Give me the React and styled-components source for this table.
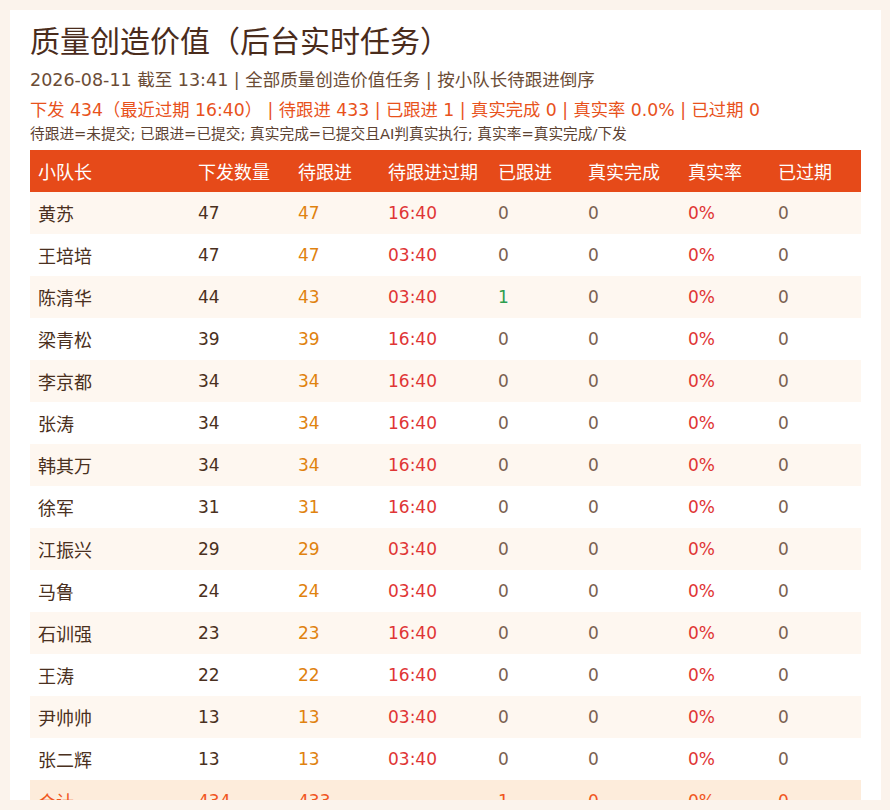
import React from "react";
import styled, { createGlobalStyle } from "styled-components";

const GlobalStyle = createGlobalStyle`
  html, body {
    margin: 0;
    padding: 0;
    background: #fbf3ec;
  }
  body {
    font-family: "DejaVu Sans", "Noto Sans CJK SC", sans-serif;
  }
`;

const leaders = [
  { name: "黄苏", issued: 47, pending: 47, due: "16:40", done: 0, real: 0, rate: "0%", expired: 0 },
  { name: "王培培", issued: 47, pending: 47, due: "03:40", done: 0, real: 0, rate: "0%", expired: 0 },
  { name: "陈清华", issued: 44, pending: 43, due: "03:40", done: 1, real: 0, rate: "0%", expired: 0 },
  { name: "梁青松", issued: 39, pending: 39, due: "16:40", done: 0, real: 0, rate: "0%", expired: 0 },
  { name: "李京都", issued: 34, pending: 34, due: "16:40", done: 0, real: 0, rate: "0%", expired: 0 },
  { name: "张涛", issued: 34, pending: 34, due: "16:40", done: 0, real: 0, rate: "0%", expired: 0 },
  { name: "韩其万", issued: 34, pending: 34, due: "16:40", done: 0, real: 0, rate: "0%", expired: 0 },
  { name: "徐军", issued: 31, pending: 31, due: "16:40", done: 0, real: 0, rate: "0%", expired: 0 },
  { name: "江振兴", issued: 29, pending: 29, due: "03:40", done: 0, real: 0, rate: "0%", expired: 0 },
  { name: "马鲁", issued: 24, pending: 24, due: "03:40", done: 0, real: 0, rate: "0%", expired: 0 },
  { name: "石训强", issued: 23, pending: 23, due: "16:40", done: 0, real: 0, rate: "0%", expired: 0 },
  { name: "王涛", issued: 22, pending: 22, due: "16:40", done: 0, real: 0, rate: "0%", expired: 0 },
  { name: "尹帅帅", issued: 13, pending: 13, due: "03:40", done: 0, real: 0, rate: "0%", expired: 0 },
  { name: "张二辉", issued: 13, pending: 13, due: "03:40", done: 0, real: 0, rate: "0%", expired: 0 },
];

const columns = ["小队长", "下发数量", "待跟进", "待跟进过期", "已跟进", "真实完成", "真实率", "已过期"];
const widths = [160, 100, 90, 110, 90, 100, 90, 91];

const App = () => {
  return (
    <>
      <GlobalStyle />
      <Card>
        <Title>质量创造价值（后台实时任务）</Title>
        <Subtitle>2026-08-11 截至 13:41 | 全部质量创造价值任务 | 按小队长待跟进倒序</Subtitle>
        <Stats>
          下发 434（最近过期 16:40） | 待跟进 433 | 已跟进 1 | 真实完成 0 | 真实率 0.0% | 已过期 0
        </Stats>
        <Notes>
          待跟进=未提交; 已跟进=已提交; 真实完成=已提交且AI判真实执行; 真实率=真实完成/下发
        </Notes>

        <Table>
          <colgroup>
            {widths.map((w, i) => (
              <col key={i} style={{ width: w }} />
            ))}
          </colgroup>
          <thead>
            <tr>
              {columns.map((c) => (
                <Th key={c}>{c}</Th>
              ))}
            </tr>
          </thead>
          <tbody>
            {leaders.map((row) => (
              <Row key={row.name}>
                <Td>{row.name}</Td>
                <Td $num>{row.issued}</Td>
                <Td $num $tone="pending">{row.pending}</Td>
                <Td $num $tone="alert">{row.due}</Td>
                <Td $num $tone={row.done > 0 ? "good" : "muted"}>{row.done}</Td>
                <Td $num $tone="muted">{row.real}</Td>
                <Td $num $tone="alert">{row.rate}</Td>
                <Td $num $tone="muted">{row.expired}</Td>
              </Row>
            ))}
            <TotalRow>
              <Td $tone="total">合计</Td>
              <Td $num $tone="total">434</Td>
              <Td $num $tone="total">433</Td>
              <Td $num $tone="total">-</Td>
              <Td $num $tone="total">1</Td>
              <Td $num $tone="total">0</Td>
              <Td $num $tone="total">0%</Td>
              <Td $num $tone="total">0</Td>
            </TotalRow>
          </tbody>
        </Table>
      </Card>
    </>
  );
};

export default App;

// Styled Components

const tones = {
  base: "#4a3020",
  pending: "#e0820f",
  alert: "#e03535",
  good: "#2e9e4e",
  muted: "#7a6050",
  total: "#f0561e",
};

const Card = styled.div`
  box-sizing: border-box;
  margin: 10px 9px 0 10px;
  height: 790px;
  padding: 14px 20px 0;
  background: #ffffff;
`;

const Title = styled.h1`
  margin: 0;
  font-size: 30px;
  line-height: 36px;
  font-weight: 400;
  color: #4a2c1c;
`;

const Subtitle = styled.div`
  margin-top: 6px;
  font-size: 17.5px;
  line-height: 28px;
  color: #6b4c36;
`;

const Stats = styled.div`
  margin-top: 2px;
  font-size: 17.3px;
  line-height: 28px;
  color: #e8521c;
  white-space: pre;
`;

const Notes = styled.div`
  font-size: 14.7px;
  line-height: 20px;
  color: #5c4232;
`;

const Table = styled.table`
  margin-top: 6px;
  width: 831px;
  border-collapse: collapse;
  table-layout: fixed;
`;

const Th = styled.th`
  height: 42px;
  padding: 0 8px;
  background: #e64a19;
  color: #ffffff;
  font-size: 18px;
  font-weight: 400;
  text-align: left;
`;

const Row = styled.tr`
  background: #ffffff;

  &:nth-child(odd) {
    background: #fef7f0;
  }
`;

const TotalRow = styled.tr`
  background: #fdecdb;
`;

const Td = styled.td`
  height: 42px;
  padding: 0 8px;
  font-size: ${({ $num }) => ($num ? "17px" : "18px")};
  color: ${({ $tone }) => tones[$tone] || tones.base};
  text-align: left;
  white-space: nowrap;
`;
